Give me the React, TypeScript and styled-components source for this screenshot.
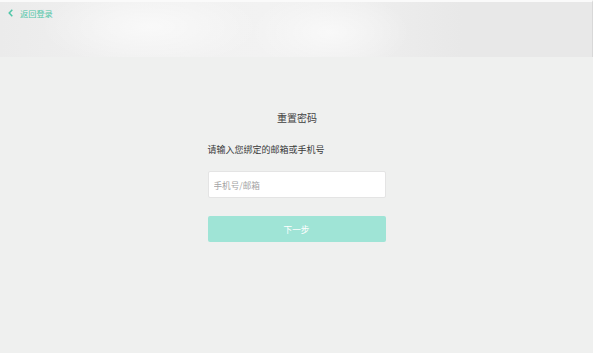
import React from "react";
import styled, { createGlobalStyle } from "styled-components";

const Global = createGlobalStyle`
  html, body { margin: 0; padding: 0; background: #eff0ef; }
  body { font-family: "Noto Sans CJK SC", sans-serif; }
`;

const Page = styled.div`
  width: 593px;
  height: 353px;
  display: flex;
  flex-direction: column;
  background: #eff0ef;
  overflow: hidden;
`;

const Header = styled.header`
  height: 57px;
  box-sizing: border-box;
  display: flex;
  align-items: flex-start;
  border-top: 2px solid #fafafa;
  border-right: 1px solid #d8d8d8;
  background:
    radial-gradient(ellipse 110px 40px at 150px 25px, rgba(255,255,255,0.6), rgba(255,255,255,0) 100%),
    radial-gradient(ellipse 80px 40px at 330px 30px, rgba(255,255,255,0.6), rgba(255,255,255,0) 100%),
    linear-gradient(90deg, #ebebeb 0%, #f0f0f0 20%, #f2f2f2 45%, #eeeeee 62%, #e8e8e8 78%, #e8e8e8 100%);
  padding: 5px 0 0 8px;
`;

const BackLink = styled.a`
  display: flex;
  align-items: center;
  gap: 7px;
  color: #50c6a8;
  font-size: 8.2px;
  line-height: 12px;
  text-decoration: none;
`;

const Main = styled.main`
  flex: 1;
  display: flex;
  flex-direction: column;
  align-items: center;
  padding-top: 53px;
`;

const Form = styled.div`
  width: 178px;
  display: flex;
  flex-direction: column;
`;

const Title = styled.div`
  text-align: center;
  font-size: 10px;
  line-height: 15px;
  color: #3f3f3f;
  margin-left: 1px;
`;

const Label = styled.div`
  margin-top: 18px;
  font-size: 9px;
  line-height: 14px;
  color: #3a3a3a;
`;

const Input = styled.input`
  margin-top: 14px;
  height: 27px;
  box-sizing: border-box;
  border: 1px solid #e4e4e4;
  border-radius: 2px;
  background: #fff;
  padding: 0 5px;
  font-family: inherit;
  font-size: 8.6px;
  color: #333;
  outline: none;
  &::placeholder { color: #a4a4a4; }
`;

const Button = styled.button`
  margin-top: 18px;
  height: 26px;
  border: none;
  border-radius: 2px;
  background: #9fe4d6;
  color: #ffffff;
  font-family: inherit;
  font-size: 8.6px;
  cursor: pointer;
`;

export default function App() {
  return (
    <Page>
      <Global />
      <Header>
        <BackLink href="#">
          <svg width="5" height="8" viewBox="0 0 5 8">
            <path d="M4.3 0.7 L1.2 4 L4.3 7.3" fill="none" stroke="#50c6a8" strokeWidth="1.5" />
          </svg>
          返回登录
        </BackLink>
      </Header>
      <Main>
        <Form>
          <Title>重置密码</Title>
          <Label>请输入您绑定的邮箱或手机号</Label>
          <Input placeholder="手机号/邮箱" />
          <Button>下一步</Button>
        </Form>
      </Main>
    </Page>
  );
}
